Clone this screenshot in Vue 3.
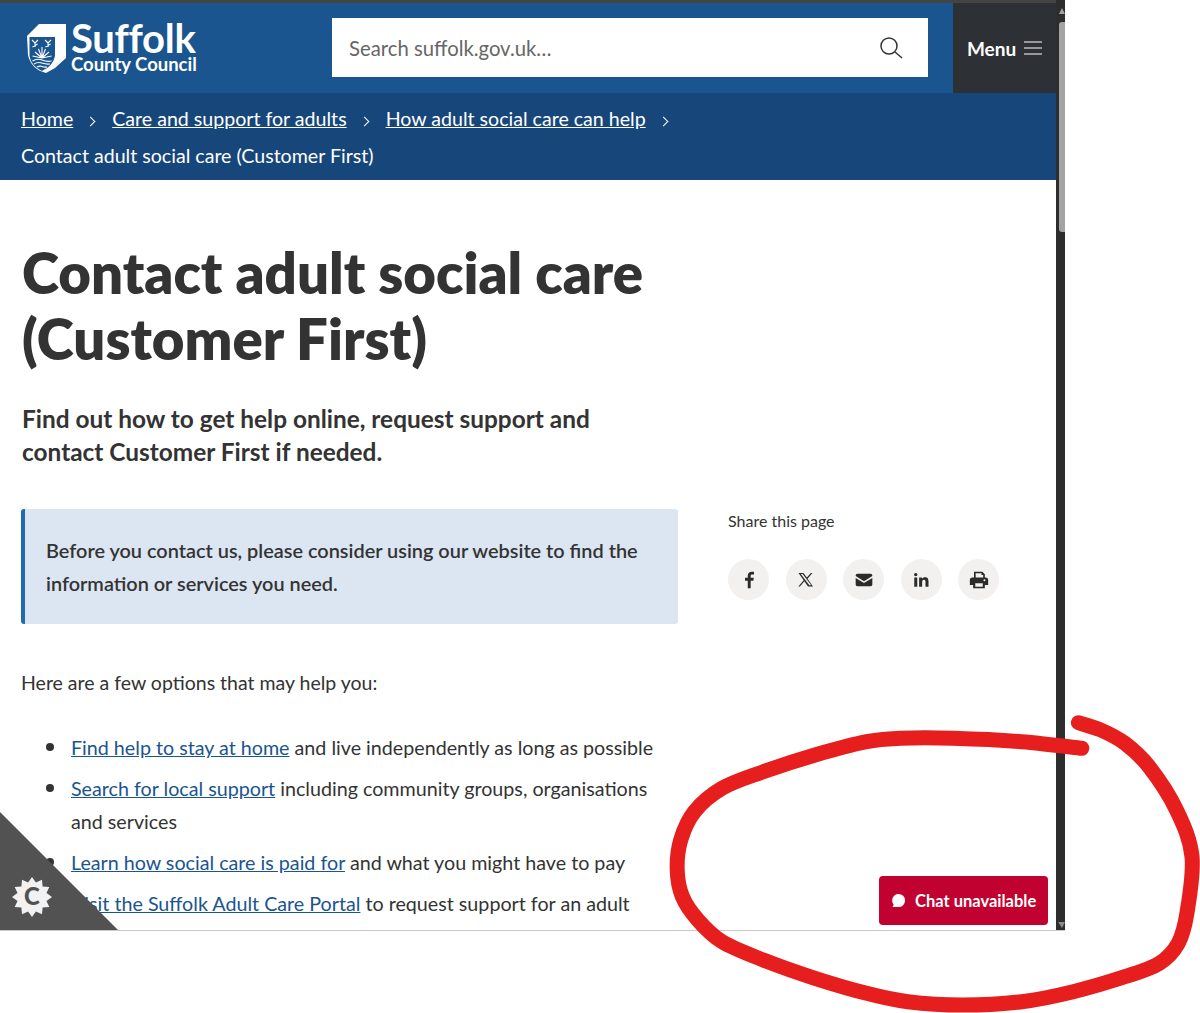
<script setup>
const pts = [[1081.8,748.3],[1021.6,741.7],[952.7,738.3],[901,738.3],[866.6,741.7],[815,755],[763.3,771.7],[722,788.3],[694.4,811.7],[680.7,840],[677.2,870],[682.4,896.7],[697.9,920],[722,941.7],[763.3,960],[815,978.3],[866.6,993.3],[907.9,1001.7],[963,1005],[1021.6,1001.7],[1073.2,991.7],[1124.9,976.7],[1159.3,963.3],[1178.2,943.3],[1186.9,913.3],[1192,856.7],[1176.5,810],[1149,766.7],[1124.9,743.3],[1100.8,730],[1078.4,722.7]]
let scribble = `M${pts[0][0]} ${pts[0][1]}`
for (let i = 0; i < pts.length - 1; i++) {
  const a = pts[Math.max(i - 1, 0)], b = pts[i], c = pts[i + 1], d = pts[Math.min(i + 2, pts.length - 1)]
  scribble += ` C${(b[0] + (c[0] - a[0]) / 6).toFixed(1)} ${(b[1] + (c[1] - a[1]) / 6).toFixed(1)} ${(c[0] - (d[0] - b[0]) / 6).toFixed(1)} ${(c[1] - (d[1] - b[1]) / 6).toFixed(1)} ${c[0]} ${c[1]}`
}
const star = []
for (let i = 0; i < 24; i++) {
  const r = i % 2 ? 15 : 20, t = (i * Math.PI) / 12
  star.push(`${(20 + r * Math.sin(t)).toFixed(1)},${(20 - r * Math.cos(t)).toFixed(1)}`)
}
const starPoints = star.join(' ')
</script>

<template>
  <div class="shot">
    <div class="frame">
      <div class="page">
        <div class="topline"></div>
        <header class="header">
          <a class="logo">
            <svg class="crest" viewBox="0 0 40 50" width="40" height="50">
              <path d="M1 13 L13 1 H40 V35 L29 45 L20 50 Q5 46 2 32 Z" fill="#fff"/>
              <path d="M3.5 14 H29 V33 Q27 43 16 48 Q5 43 3.500 33 Z" fill="#1a5590"/>
              <g stroke="#fff" stroke-width="1.1" fill="none">
                <path d="M6 17 L9 20 L12 17 M9 20 V24 M6.500 24 L11.500 21 M19 17 L22 20 L25 17 M22 20 V24 M19.500 24 L24.500 21"/>
                <path d="M16 35 V24 M16 35 L12.500 26 M16 35 L19.500 26 M16 35 L9 29 M16 35 L23 29 M16 35 L6.500 33 M16 35 L25.500 33"/>
                <path d="M6.500 38 Q11 35 16 37 T25.500 38 M8 41 Q12 38.500 16 40 T24 41 M11 44 Q14 42.500 16 43.500 T21 44"/>
              </g>
            </svg>
            <span class="logotext"><span class="l1">Suffolk</span><span class="l2">County Council</span></span>
          </a>
          <div class="search">
            <span>Search suffolk.gov.uk…</span>
            <svg viewBox="0 0 24 24" width="24" height="24" fill="none" stroke="#333" stroke-width="1.5"><circle cx="10" cy="10" r="8"/><path d="M16 16 L23 22"/></svg>
          </div>
          <div class="menu">
            <span>Menu</span>
            <svg viewBox="0 0 18 14" width="18" height="14" stroke="#fff" stroke-width="1.2"><path d="M0 1H18M0 7H18M0 13H18"/></svg>
          </div>
        </header>
        <nav class="crumbs">
          <a>Home</a><i></i><a>Care and support for adults</a><i></i><a>How adult social care can help</a><i></i>
          <span class="current">Contact adult social care (Customer First)</span>
        </nav>
        <main class="main">
          <h1>Contact adult social care (Customer First)</h1>
          <p class="lead">Find out how to get help online, request support and contact Customer First if needed.</p>
          <div class="cols">
            <div class="content">
              <div class="callout">Before you contact us, please consider using our website to find the information or services you need.</div>
              <p class="intro">Here are a few options that may help you:</p>
              <ul>
                <li><a>Find help to stay at home</a> and live independently as long as possible</li>
                <li><a>Search for local support</a> including community groups, organisations and services</li>
                <li><a>Learn how social care is paid for</a> and what you might have to pay</li>
                <li><a>Visit the Suffolk Adult Care Portal</a> to request support for an adult</li>
              </ul>
            </div>
            <aside class="share">
              <div class="share-t">Share this page</div>
              <div class="icons">
                <span class="ic"><svg viewBox="0 0 24 24" width="20" height="20" fill="#2b2b2b"><path d="M14 22v-9h3.200l.6-3.600H14V7.300c0-1.100.4-1.800 1.900-1.800H18V2.200C17.600 2.100 16.500 2 15.300 2 12.500 2 10.500 3.700 10.500 6.800v2.600H7.200V13h3.300v9z"/></svg></span>
                <span class="ic"><svg viewBox="0 0 24 24" width="18" height="18" fill="#2b2b2b"><path fill-rule="evenodd" d="M2 2.500h6.600l4.500 6.300 5.400-6.300h2.100l-6.600 7.700 7.300 10.300h-6.600l-4.900-6.900-5.900 6.900H1.800l7.100-8.300zM5 4l11.400 15h2.500L7.500 4z"/></svg></span>
                <span class="ic"><svg viewBox="0 0 24 24" width="20" height="20" fill="#2b2b2b"><path d="M4 4.500h16a2 2 0 0 1 2 2v.7l-10 6.300L2 7.200v-.7a2 2 0 0 1 2-2zM2 9.500l10 6.200 10-6.200v8a2 2 0 0 1-2 2H4a2 2 0 0 1-2-2z"/></svg></span>
                <span class="ic"><svg viewBox="0 0 24 24" width="18" height="18" fill="#2b2b2b"><path d="M3 8.500h4V21H3zM5 2.500a2.300 2.300 0 1 1 0 4.600 2.300 2.300 0 0 1 0-4.600zM9.500 8.500h3.800v1.800c.7-1.200 2.200-2.100 4.100-2.100 3.800 0 4.600 2.500 4.600 5.800V21h-4v-6.200c0-1.500-.1-3.300-2-3.300s-2.500 1.500-2.500 3.200V21h-4z"/></svg></span>
                <span class="ic"><svg viewBox="0 0 24 24" width="20" height="20" fill="#2b2b2b"><path fill-rule="evenodd" d="M6 2h10l3 3v4h1a3 3 0 0 1 3 3v6h-4v4H5v-4H1v-6a3 3 0 0 1 3-3h2zM8 4v5h9V6h-2V4zM7.500 16v4h9v-4zM18.500 11a1.200 1.200 0 1 0 0 2.400 1.200 1.200 0 0 0 0-2.400z"/></svg></span>
              </div>
            </aside>
          </div>
        </main>
      </div>
      <div class="scrollbar"><div class="arrow-up"></div><div class="thumb"></div><div class="arrow"></div></div>
      <div class="cookie">
        <svg viewBox="0 0 40 40" width="40" height="40">
          <polygon :points="starPoints" fill="#f2f2f2"/>
          <text x="20" y="27.500" text-anchor="middle" class="cookie-c">C</text>
        </svg>
      </div>
      <div class="chat">
        <svg viewBox="0 0 16 16" width="15" height="15" fill="#fff"><path d="M8 1a7 7 0 0 1 0 14H1.500l1.400-2.500A7 7 0 0 1 8 1z"/></svg>
        <span>Chat unavailable</span>
      </div>
    </div>
    <svg class="scribble" viewBox="0 0 1200 1013" width="1200" height="1013">
      <path :d="scribble" fill="none" stroke="#e61e1e" stroke-width="15" stroke-linecap="round" stroke-linejoin="round"/>
    </svg>
  </div>
</template>

<style scoped>
.shot { position: relative; width: 1200px; height: 1013px; background: #fff; overflow: hidden; font-family: "Lato", "Noto Sans", sans-serif; color: #333; }
.frame { position: relative; width: 1065px; height: 931px; overflow: hidden; border-bottom: 1px solid #c8c8c8; box-sizing: border-box; display: flex; }
.page { width: 1056px; flex: none; }
.topline { height: 3px; background: #444; }
.header { height: 90px; background: #1a5590; display: flex; align-items: center; }
.logo { display: flex; align-items: center; gap: 5px; margin-left: 26px; width: 306px; flex: none; color: #fff; }
.crest { flex: none; }
.logotext { display: flex; flex-direction: column; }
.l1 { font-size: 40px; font-weight: 700; line-height: 32px; letter-spacing: -0.3px; }
.l2 { font-size: 18.500px; font-weight: 700; line-height: 20px; }
.search { width: 596px; height: 59px; margin-top: -1px; background: #fff; flex: none; box-sizing: border-box; padding: 0 25px 0 17px; display: flex; align-items: center; justify-content: space-between; font-size: 20.300px; color: #666; }
.menu { margin-left: 25px; width: 103px; height: 90px; background: #2d3034; flex: none; color: #fff; font-weight: 700; font-size: 19px; display: flex; align-items: center; justify-content: center; gap: 8px; }
.crumbs { height: 87px; background: #17477a; box-sizing: border-box; padding: 7px 21px; color: #fff; font-size: 19.600px; line-height: 37px; }
.crumbs a { text-decoration: underline; }
.crumbs i { display: inline-block; width: 39px; position: relative; height: 10px; }
.crumbs i::after { content: ""; position: absolute; left: 14px; top: 2px; width: 6px; height: 6px; border-top: 1.5px solid #fff; border-right: 1.500px solid #fff; transform: rotate(45deg); }
.current { display: block; }
.main { padding: 59px 0 0 22px; }
h1 { margin: 0; width: 700px; font-size: 56.300px; line-height: 66px; font-weight: 800; color: #333; }
.lead { margin: 31px 0 0; width: 620px; font-size: 24.400px; line-height: 33px; font-weight: 700; }
.cols { display: flex; margin-top: 41px; }
.content { width: 657px; flex: none; font-size: 19.500px; margin-left: -1px; }
.callout { box-sizing: border-box; height: 115px; background: #dbe6f2; border-left: 4px solid #1f6db0; border-radius: 3px; padding: 25px 21px 0; line-height: 33px; font-weight: 600; font-size: 19.900px; }
.intro { margin: 42px 0 0; line-height: 33px; }
ul { margin: 32px 0 0; padding: 0 0 0 50px; line-height: 33px; list-style: none; font-size: 19.700px; }
li { margin-bottom: 8px; position: relative; }
li::before { content: ""; position: absolute; left: -25px; top: 12px; width: 8px; height: 8px; border-radius: 50%; background: #333; }
li a { color: #1a5590; text-decoration: underline; }
.share { margin-left: 50px; font-size: 16px; padding-top: 1px; }
.share-t { line-height: 22px; }
.icons { display: flex; gap: 16.500px; margin-top: 27px; }
.ic { width: 41px; height: 41px; border-radius: 50%; background: #f2f1f0; display: flex; align-items: center; justify-content: center; }
.scrollbar { position: relative; width: 9px; height: 100%; background: #2d2d2d; }
.thumb { position: absolute; left: 3px; top: 22px; width: 6px; height: 210px; background: #a3a3a3; border-radius: 3px 0 0 3px; }
.arrow-up { position: absolute; left: 3px; top: 8px; border-left: 3px solid transparent; border-right: 3px solid transparent; border-bottom: 6px solid #a3a3a3; }
.arrow { position: absolute; left: 2px; bottom: 2px; border-left: 4px solid transparent; border-right: 3px solid transparent; border-top: 6px solid #8a8a8a; }
.cookie { position: absolute; left: 0; bottom: 0; width: 118px; height: 118px; background: #525252; clip-path: polygon(0 0, 100% 100%, 0 100%); }
.cookie svg { position: absolute; left: 12px; top: 65px; }
.cookie-c { font-size: 24px; font-weight: 900; fill: #525252; font-family: "Lato", sans-serif; }
.chat { position: absolute; left: 879px; top: 876px; width: 169px; height: 49px; background: #c10230; border-radius: 4px; color: #fff; font-weight: 700; font-size: 16.500px; display: flex; align-items: center; gap: 9px; box-sizing: border-box; padding-left: 12px; }
.scribble { position: absolute; left: 0; top: 0; pointer-events: none; }
</style>
